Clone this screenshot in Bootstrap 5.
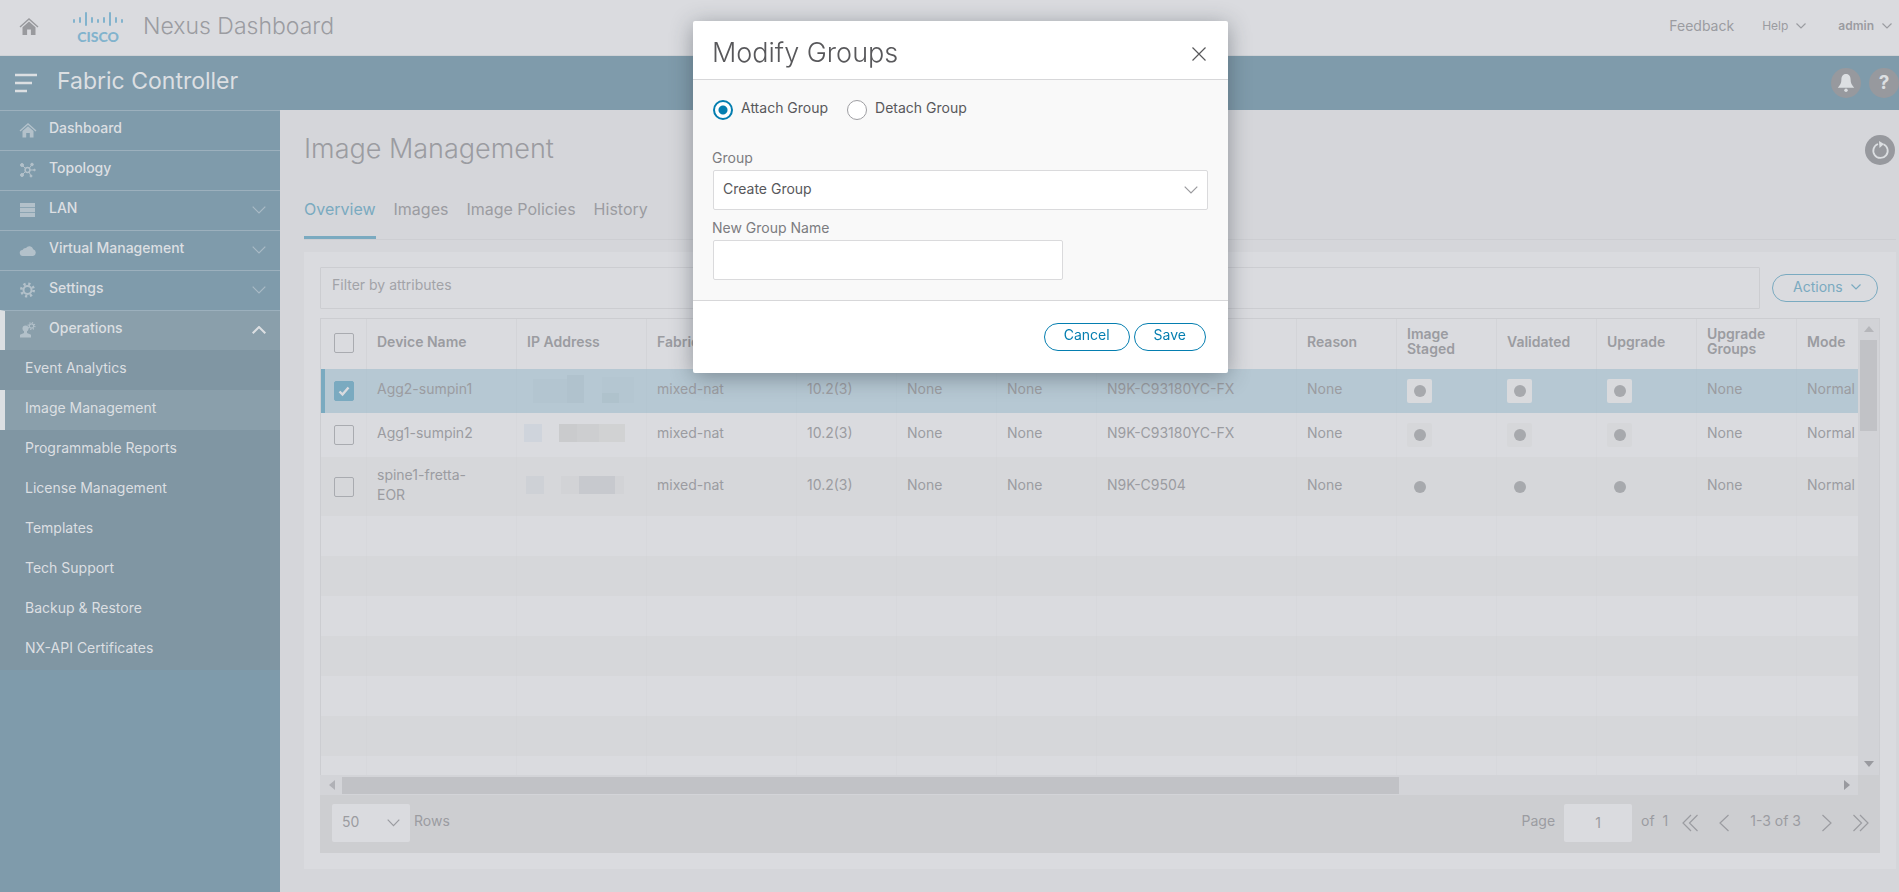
<!DOCTYPE html>
<html lang="en">
<head>
<meta charset="utf-8">
<meta name="viewport" content="width=device-width, initial-scale=1">
<title>Nexus Dashboard - Image Management</title>
<link href="https://cdn.jsdelivr.net/npm/bootstrap@5.3.0/dist/css/bootstrap.min.css" rel="stylesheet">
<style>
:root{--surface:#dadbdf;--page:#d5d6da;--bar:#7f9bab;--ink:#9b9ca1;--accent:#7aaac0;--rule:#cccdd1;--cell:#d7d8dc;--blue:#047eb0}
body{font-family:Inter,"Liberation Sans",sans-serif;font-size:14px;line-height:20px;color:var(--ink);background:var(--page)}
a{text-decoration:none;color:inherit}
svg{display:block;flex:none}
.stroke{fill:none;stroke:currentColor;stroke-width:1.2}
button.plain{border:0;background:none;padding:0;color:inherit}
.topbar{height:56px;background:var(--surface);border-bottom:1px solid #cfd2d6;padding:0 7px 4px 19px}
.brand-title{font-size:23px;font-weight:300;line-height:32px}
.logo-mark{color:#82b3cd;font-family:Lato,sans-serif;font-weight:900;font-size:14px;line-height:14px;width:50px;margin:5px 4px 0 34px}
.top-menu{font-size:12px;gap:8px}
.appbar{height:54px;background:var(--bar);color:#dcdfe2;padding-left:15px;overflow:hidden}
.app-title{font-size:23px;line-height:32px;padding-bottom:4px;margin-left:20px}
.disc{width:30px;height:30px;border-radius:50%;background:#97999e!important;color:#dcdfe2!important}
.disc-text{font-size:19px}
.side{width:280px;background:var(--bar);color:#dcdfe2;font-weight:500;flex:none}
.side-link{height:40px;border-top:1px solid #9cb0bd;padding:0 14px 0 19px}
.side-link .txt{padding-bottom:6px}
.side-link .ico,.side-link .chev{margin-bottom:2px}
.side-link .ico{color:#b3c1ca}
.side-link .chev{color:#a9bac5}
.side-link.open{background:#8a9fab;border-left:5px solid #dcdfe2;padding-left:14px}
.side-link.open .chev{color:#dcdfe2;stroke-width:2}
.submenu{background:#8096a3;font-weight:400}
.sub-link{height:40px;padding:0 0 4px 25px}
.sub-link.current{background:#8a9fab;border-left:5px solid #dcdfe2;padding-left:20px}
.content{padding:0 3px 21px 24px;min-width:0}
.title-row{height:80px;padding-right:1px}
.page-title{font-size:27px;font-weight:300;line-height:36px;padding-bottom:2px}
.tabs{border-bottom:1px solid #cdced2;gap:18px;font-size:16px;line-height:24px}
.tabs .nav-link{color:var(--ink);padding:7px 0 15px;border-bottom:3px solid transparent}
.tabs .nav-link.active{color:var(--accent);border-color:var(--accent)}
.panel{background:var(--surface);margin-top:12px;padding:15px 16px 16px}
.filter{height:42px;border:1px solid var(--rule);border-radius:1px;background:transparent;color:var(--ink);padding:0 12px 8px 11px;min-width:0}
.filter::placeholder{color:#a2a3a8;opacity:1}
.pill{height:28px;border-radius:14px;border:1px solid currentColor;background:transparent;color:inherit;line-height:20px;padding:0 19px 4px}
.pill.actions{color:var(--accent);margin:0 2px 0 12px;width:106px;padding:0 0 2px 20px}
.datagrid{border:1px solid var(--rule);border-bottom:0;margin-top:9px;display:grid;grid-template-columns:minmax(0,1fr) 21px}
.datagrid table{table-layout:fixed;width:100%;min-width:1537px;border-collapse:separate;border-spacing:0}
.w-check{width:45px}.w-sm{width:100px}.w-ip{width:130px}.w-md{width:150px}.w-lg{width:200px}
.datagrid th,.datagrid td{padding:0 3px 4px 10px;border-left:1px solid var(--cell);vertical-align:middle;white-space:nowrap}
.datagrid th{height:50px;padding-bottom:6px;border-color:#d3d4d8;font-weight:600;line-height:15px;white-space:normal}
.datagrid td{height:44px}
.datagrid tr>:first-child{border-left:0;padding-left:13px}
.datagrid .mid{padding-bottom:0}
.datagrid th.mid{padding-bottom:2px}
.datagrid tr.dark td{background:#d6d7da;border-color:#d4d5d8}
.datagrid tr.picked td{background:#b6c8d3;border-color:#b4c6d1}
.datagrid tr.picked td:first-child{border-left:4px solid var(--accent);padding-left:9px}
.datagrid tr.tall td{height:59px;white-space:normal}
.datagrid tr.blank td{height:40px;padding:0}
.datagrid tr.part td{height:19px}
.tick{appearance:none;display:block;width:20px;height:20px;margin:0;border:1px solid #a9abb0;border-radius:2px}
.tick:checked{border-color:var(--accent);background:var(--accent) url("data:image/svg+xml,%3Csvg xmlns='http://www.w3.org/2000/svg' viewBox='0 0 18 18'%3E%3Cpath d='M4.5 9.5l3 3 6-7' fill='none' stroke='%23dadbdf' stroke-width='2.4'/%3E%3C/svg%3E")}
.state{display:flex;width:25px;height:24px;border-radius:2px;background:#d6d7da;align-items:center;justify-content:center}
.state::after{content:"";width:12px;height:12px;border-radius:50%;background:#a7a9ad}
.picked .state{background:#d9dadd}
.ipmask{margin-left:-3px}
.vtrack{background:#d2d3d7;padding:7px 2px 8px;color:#b5b6ba}
.vthumb{width:17px;height:91px;background:#c1c2c6;margin-top:8px}
.hrow{background:#cdced1}
.htrack{height:20px;background:#d3d4d8;margin-right:22px;padding:0 8px 0 9px;color:#b0b1b6}
.hthumb{height:17px;width:69.5%;background:#c1c2c6;margin:0 auto 0 7px}
.dark-arrow{color:#999a9f}
.gridfoot{background:#cdced1;height:58px;padding:0 11px 2px 12px}
.gridfoot .txt{padding-bottom:4px}
.footfield{height:38px;border:0;border-radius:2px;background:var(--surface);color:var(--ink);padding-bottom:2px}
.pgnum{width:68px;text-align:center;margin:0 9px}
.pager{gap:21px;margin-left:14px}
.rowsel{width:78px}
.rowsel select{appearance:none;width:100%;padding:0 10px 2px}
.overlay-chev{position:absolute;right:10px;top:0;bottom:0;margin:auto;pointer-events:none}
.field-chev{color:#9a9a9e}
.modal{padding-left:22px}
.modal-dialog{max-width:535px;margin-top:21px}
.modal-content{border:0;border-radius:2px;color:#58585b;box-shadow:0 4px 22px rgba(40,50,60,.42)}
.modal-header{height:59px;padding:0 21px 0 19px;border-bottom:1px solid #d7d7d9;border-radius:0}
.modal-title{font-size:27px;font-weight:300;line-height:36px;padding-top:6px}
.modal-body{background:#f9f9f9;padding:18px 20px 20px 19px}
.radio-row{margin:0 0 26px 1px}
.radio{appearance:none;width:20px;height:20px;margin:0;border:1px solid #9e9ea2;border-radius:50%;background:#fff}
.radio:checked{border:2px solid var(--blue);background:radial-gradient(circle,var(--blue) 4px,#fff 5px)}
.radio-label{padding:0 0 4px 8px;margin-right:19px}
.flabel{color:#7c7c80;display:block;margin-bottom:2px}
.field{height:40px;border:1px solid #dadadc;border-radius:2px;background:#fff;color:#58585b;appearance:none;padding:0 9px 2px;margin-left:1px}
.field-wide{width:calc(100% - 1px)}
.field-part{width:350px;max-width:100%}
.modal-footer{height:73px;padding:0 22px;gap:4px;color:var(--blue);border-top:1px solid #d7d7d9}
.modal-footer>*{margin:0}
</style>
</head>
<body class="d-flex flex-column min-vh-100">
<header class="topbar d-flex align-items-center">
  <a href="#" aria-label="Home"><svg width="20" height="20" viewBox="0 0 20 20"><path d="M1 11l9-8 9 8" fill="none" stroke="#999a9e" stroke-width="1.5"/><path d="M3.5 11.2L10 5.5l6.5 5.7V19h-4.6v-5.5H8.1V19H3.5z" fill="#999a9e"/></svg></a>
  <div class="logo-mark text-center">
    <svg width="50" height="14" viewBox="0 0 50 14" stroke="#82b3cd" stroke-width="2" stroke-linecap="round"><path d="M1 8v2M7 6v4M13 1v12M19 6v4M25 8v2M31 6v4M37 1v12M43 6v4M49 8v2"/></svg>
    <div class="mt-1">CISCO</div>
  </div>
  <div class="brand-title ms-3">Nexus Dashboard</div>
  <nav class="ms-auto d-flex align-items-center">
    <a href="#">Feedback</a>
    <button class="plain top-menu d-flex align-items-center ms-4 ps-1">Help<svg class="stroke" width="10" height="6" viewBox="0 0 10 6"><path d="M.5.5L5 5 9.5.5"/></svg></button>
    <button class="plain top-menu d-flex align-items-center fw-semibold ms-4 ps-2">admin<svg class="stroke" width="10" height="6" viewBox="0 0 10 6"><path d="M.5.5L5 5 9.5.5"/></svg></button>
  </nav>
</header>
<div class="appbar d-flex align-items-center">
  <button class="plain" aria-label="Toggle menu"><svg width="22" height="20" viewBox="0 0 22 20" stroke="currentColor" stroke-width="2.4"><path d="M0 2h22M0 10h17M0 18h12"/></svg></button>
  <div class="app-title">Fabric Controller</div>
  <div class="ms-auto d-flex gap-2">
    <button class="plain disc d-flex align-items-center justify-content-center" aria-label="Notifications"><svg width="18" height="20" viewBox="0 0 18 20" fill="currentColor"><path d="M9 1C5.7 1 4.4 3.5 4.4 6.5 4.4 10 3.2 12 .8 14.8h16.4C14.8 12 13.6 10 13.6 6.5 13.6 3.5 12.3 1 9 1z"/><circle cx="9" cy="17.300" r="1.700"/></svg></button>
    <button class="plain disc disc-text d-flex align-items-center justify-content-center fw-bold">?</button>
  </div>
</div>
<div class="d-flex flex-grow-1">
  <nav class="side">
    <a href="#" class="side-link d-flex align-items-center"><svg class="ico" width="18" height="16" viewBox="0 0 18 16"><path d="M1 9l8-7 8 7" fill="none" stroke="currentColor" stroke-width="1.4"/><path d="M3.5 9L9 4.3 14.5 9v6.5h-3.7V11H7.2v4.5H3.5z" fill="currentColor"/></svg><span class="txt ms-2 ps-1">Dashboard</span></a>
    <a href="#" class="side-link d-flex align-items-center"><svg class="ico" width="18" height="16" viewBox="0 0 18 16" fill="currentColor" stroke="currentColor"><path d="M3 3l5 5M13 2.5L9 8M3 13l5-5M16 8H9M9 8l3 6"/><circle cx="3" cy="3" r="1.5"/><circle cx="13" cy="2.5" r="1.3"/><circle cx="3" cy="13" r="1.5"/><circle cx="15.5" cy="8" r=".8"/><circle cx="12" cy="14" r="1"/><circle cx="8.5" cy="8" r="2.400" fill="#7f9bab" stroke-width="1.500"/></svg><span class="txt ms-2 ps-1">Topology</span></a>
    <a href="#" class="side-link d-flex align-items-center"><svg class="ico" width="18" height="16" viewBox="0 0 18 16" fill="currentColor"><path d="M1 1h15v4.200H1zM1 6h15v4H1zM1 10.800h15v4.200H1z"/></svg><span class="txt ms-2 ps-1">LAN</span><svg class="chev stroke ms-auto" width="14" height="8" viewBox="0 0 14 8"><path d="M.7.7L7 7 13.300.7"/></svg></a>
    <a href="#" class="side-link d-flex align-items-center"><svg class="ico" width="18" height="16" viewBox="0 0 18 16" fill="currentColor"><path d="M4 14a3 3 0 01-.5-6A3.600 3.600 0 017 6a4 4 0 017.200 1.200A3.500 3.500 0 0114 14z"/></svg><span class="txt ms-2 ps-1">Virtual Management</span><svg class="chev stroke ms-auto" width="14" height="8" viewBox="0 0 14 8"><path d="M.7.7L7 7 13.300.7"/></svg></a>
    <a href="#" class="side-link d-flex align-items-center"><svg class="ico" width="18" height="16" viewBox="0 0 18 16" fill="none" stroke="currentColor"><circle cx="8.500" cy="8" r="4" stroke-width="2"/><circle cx="8.500" cy="8" r="6.200" stroke-width="2.600" stroke-dasharray="2.200 2.670"/></svg><span class="txt ms-2 ps-1">Settings</span><svg class="chev stroke ms-auto" width="14" height="8" viewBox="0 0 14 8"><path d="M.7.7L7 7 13.300.7"/></svg></a>
    <a href="#" class="side-link open d-flex align-items-center"><svg class="ico" width="18" height="16" viewBox="0 0 18 16" fill="currentColor"><circle cx="6.500" cy="6.500" r="3"/><path d="M5 8h3v3l4 1.700V15.500H1v-2.800L5 11z"/><circle cx="12.500" cy="4" r="2.200" fill="none" stroke="currentColor" stroke-width="1.200"/><circle cx="12.500" cy="4" r="3.400" fill="none" stroke="currentColor" stroke-width="1.200" stroke-dasharray="1.200 1.470"/></svg><span class="txt ms-2 ps-1">Operations</span><svg class="chev stroke ms-auto" width="14" height="8" viewBox="0 0 14 8"><path d="M.7 7.300L7 1l6.300 6.300"/></svg></a>
    <div class="submenu">
      <a href="#" class="sub-link d-flex align-items-center">Event Analytics</a>
      <a href="#" class="sub-link current d-flex align-items-center">Image Management</a>
      <a href="#" class="sub-link d-flex align-items-center">Programmable Reports</a>
      <a href="#" class="sub-link d-flex align-items-center">License Management</a>
      <a href="#" class="sub-link d-flex align-items-center">Templates</a>
      <a href="#" class="sub-link d-flex align-items-center">Tech Support</a>
      <a href="#" class="sub-link d-flex align-items-center">Backup &amp; Restore</a>
      <a href="#" class="sub-link d-flex align-items-center">NX-API Certificates</a>
    </div>
  </nav>
  <main class="content flex-grow-1">
    <div class="title-row d-flex align-items-center justify-content-between">
      <h1 class="page-title m-0">Image Management</h1>
      <button class="plain disc d-flex align-items-center justify-content-center" aria-label="Refresh"><svg width="20" height="20" viewBox="0 0 20 20"><path d="M13.500 4.200A7.200 7.200 0 1 1 8 4" fill="none" stroke="currentColor" stroke-width="1.800"/><path d="M9 1l5 3-4.500 4z" fill="currentColor"/></svg></button>
    </div>
    <nav class="nav tabs">
      <a class="nav-link active" href="#">Overview</a>
      <a class="nav-link" href="#">Images</a>
      <a class="nav-link" href="#">Image Policies</a>
      <a class="nav-link" href="#">History</a>
    </nav>
    <section class="panel">
      <div class="d-flex align-items-center">
        <input class="filter flex-grow-1" type="text" placeholder="Filter by attributes" aria-label="Filter by attributes">
        <button class="pill actions d-flex align-items-center">Actions<svg class="stroke ms-2" width="10" height="6" viewBox="0 0 10 6"><path d="M.5.5L5 5 9.5.5"/></svg></button>
      </div>
      <div class="datagrid">
        <div class="overflow-hidden">
          <table>
            <colgroup><col class="w-check"><col class="w-md"><col class="w-ip"><col class="w-md"><col class="w-sm"><col class="w-sm"><col class="w-sm"><col class="w-lg"><col class="w-sm"><col class="w-sm"><col class="w-sm"><col class="w-sm"><col class="w-sm"><col></colgroup>
            <thead><tr>
              <th class="mid"><input type="checkbox" class="tick" aria-label="Select all"></th><th>Device Name</th><th>IP Address</th><th>Fabric Name</th><th>Version</th><th>Policy</th><th>Status</th><th>Model</th><th>Reason</th><th>Image<br>Staged</th><th>Validated</th><th>Upgrade</th><th>Upgrade<br>Groups</th><th>Mode</th>
            </tr></thead>
            <tbody>
              <tr class="picked"><td class="mid"><input type="checkbox" class="tick" checked aria-label="Select Agg2-sumpin1"></td><td>Agg2-sumpin1</td>
                <td><svg class="ipmask" width="110" height="28"><path fill="#b3c5d0" d="M9 4h34v24H9z"/><path fill="#b0c2cd" d="M43 0h17v28H43z"/><path fill="#b4c6d1" d="M78 2h32v26H78z"/><path fill="#afc2cc" d="M78 18h17v10H78z"/></svg></td>
                <td>mixed-nat</td><td>10.2(3)</td><td>None</td><td>None</td><td>N9K-C93180YC-FX</td><td>None</td><td class="mid"><span class="state"></span></td><td class="mid"><span class="state"></span></td><td class="mid"><span class="state"></span></td><td>None</td><td>Normal</td></tr>
              <tr><td class="mid"><input type="checkbox" class="tick" aria-label="Select Agg1-sumpin2"></td><td>Agg1-sumpin2</td>
                <td><svg class="ipmask" width="110" height="18"><path fill="#cfd4dc" d="M0 0h18v18H0z"/><path fill="#cacbcd" d="M35 0h18v18H35z"/><path fill="#cdced0" d="M53 0h22v18H53z"/><path fill="#d1d2d3" d="M75 0h26v18H75z"/></svg></td>
                <td>mixed-nat</td><td>10.2(3)</td><td>None</td><td>None</td><td>N9K-C93180YC-FX</td><td>None</td><td class="mid"><span class="state"></span></td><td class="mid"><span class="state"></span></td><td class="mid"><span class="state"></span></td><td>None</td><td>Normal</td></tr>
              <tr class="dark tall"><td class="mid"><input type="checkbox" class="tick" aria-label="Select spine1-fretta-EOR"></td><td>spine1-fretta-<br>EOR</td>
                <td><svg class="ipmask" width="110" height="18"><path fill="#ced1d6" d="M2 0h18v18H2z"/><path fill="#d2d3d6" d="M37 0h18v18H37z"/><path fill="#c7c9ce" d="M55 0h36v18H55z"/><path fill="#d2d3d6" d="M91 0h9v18H91z"/></svg></td>
                <td>mixed-nat</td><td>10.2(3)</td><td>None</td><td>None</td><td>N9K-C9504</td><td>None</td><td class="mid"><span class="state"></span></td><td class="mid"><span class="state"></span></td><td class="mid"><span class="state"></span></td><td>None</td><td>Normal</td></tr>
              <tr class="blank"><td></td><td></td><td></td><td></td><td></td><td></td><td></td><td></td><td></td><td></td><td></td><td></td><td></td><td></td></tr>
              <tr class="blank dark"><td></td><td></td><td></td><td></td><td></td><td></td><td></td><td></td><td></td><td></td><td></td><td></td><td></td><td></td></tr>
              <tr class="blank"><td></td><td></td><td></td><td></td><td></td><td></td><td></td><td></td><td></td><td></td><td></td><td></td><td></td><td></td></tr>
              <tr class="blank dark"><td></td><td></td><td></td><td></td><td></td><td></td><td></td><td></td><td></td><td></td><td></td><td></td><td></td><td></td></tr>
              <tr class="blank"><td></td><td></td><td></td><td></td><td></td><td></td><td></td><td></td><td></td><td></td><td></td><td></td><td></td><td></td></tr>
              <tr class="blank dark"><td></td><td></td><td></td><td></td><td></td><td></td><td></td><td></td><td></td><td></td><td></td><td></td><td></td><td></td></tr>
              <tr class="blank part"><td></td><td></td><td></td><td></td><td></td><td></td><td></td><td></td><td></td><td></td><td></td><td></td><td></td><td></td></tr>
            </tbody>
          </table>
        </div>
        <div class="vtrack d-flex flex-column align-items-center">
          <svg width="10" height="6" viewBox="0 0 10 6" fill="currentColor"><path d="M0 6l5-6 5 6z"/></svg>
          <div class="vthumb"></div>
          <svg class="mt-auto dark-arrow" width="10" height="6" viewBox="0 0 10 6" fill="currentColor"><path d="M0 0l5 6 5-6z"/></svg>
        </div>
      </div>
      <div class="hrow">
        <div class="htrack d-flex align-items-center">
          <svg width="6" height="10" viewBox="0 0 6 10" fill="currentColor"><path d="M6 0L0 5l6 5z"/></svg>
          <div class="hthumb"></div>
          <svg class="dark-arrow" width="6" height="10" viewBox="0 0 6 10" fill="currentColor"><path d="M0 0l6 5-6 5z"/></svg>
        </div>
      </div>
      <div class="gridfoot d-flex align-items-center">
        <div class="rowsel position-relative"><select id="rows" class="footfield"><option>50</option></select><svg class="stroke overlay-chev" width="13" height="8" viewBox="0 0 13 8"><path d="M.7.7l5.800 6 5.800-6"/></svg></div>
        <label for="rows" class="txt ps-1 ms-0">Rows</label>
        <div class="ms-auto d-flex align-items-center">
          <label for="pg" class="txt">Page</label>
          <input id="pg" type="text" class="footfield pgnum" value="1">
          <span class="txt">of &nbsp;1</span>
          <div class="pager d-flex align-items-center">
          <button class="plain" aria-label="First page"><svg class="stroke" width="16" height="18" viewBox="0 0 16 18"><path d="M9 1L1 9l8 8M15.500 1l-8 8 8 8"/></svg></button>
          <button class="plain" aria-label="Previous page"><svg class="stroke" width="10" height="18" viewBox="0 0 10 18"><path d="M9.500 1L1 9l8.500 8"/></svg></button>
          <span class="txt">1-3 of 3</span>
          <button class="plain" aria-label="Next page"><svg class="stroke" width="10" height="18" viewBox="0 0 10 18"><path d="M.5 1L9 9 .5 17"/></svg></button>
          <button class="plain" aria-label="Last page"><svg class="stroke" width="16" height="18" viewBox="0 0 16 18"><path d="M.5 1l8 8-8 8M7 1l8 8-8 8"/></svg></button>
          </div>
        </div>
      </div>
    </section>
  </main>
</div>
<div class="modal d-block" tabindex="-1" role="dialog" aria-labelledby="dlgTitle">
  <div class="modal-dialog">
    <form class="modal-content">
      <div class="modal-header">
        <h2 class="modal-title" id="dlgTitle">Modify Groups</h2>
        <button type="button" class="plain mt-2" aria-label="Close"><svg class="stroke" width="16" height="16" viewBox="0 0 16 16"><path d="M1.500 1.500l13 13M14.500 1.500l-13 13"/></svg></button>
      </div>
      <div class="modal-body">
        <div class="radio-row d-flex align-items-center">
          <input class="radio" type="radio" name="mode" id="attach" checked><label class="radio-label" for="attach">Attach Group</label>
          <input class="radio" type="radio" name="mode" id="detach"><label class="radio-label" for="detach">Detach Group</label>
        </div>
        <label class="flabel" for="grp">Group</label>
        <div class="position-relative mb-2"><select id="grp" class="field field-wide"><option>Create Group</option></select><svg class="stroke overlay-chev field-chev" width="14" height="8" viewBox="0 0 14 8"><path d="M.7.7L7 7 13.300.7"/></svg></div>
        <label class="flabel" for="gname">New Group Name</label>
        <input id="gname" type="text" class="field field-part">
      </div>
      <div class="modal-footer flex-nowrap">
        <button type="button" class="pill">Cancel</button>
        <button type="button" class="pill">Save</button>
      </div>
    </form>
  </div>
</div>
<script src="https://cdn.jsdelivr.net/npm/bootstrap@5.3.0/dist/js/bootstrap.bundle.min.js"></script>
</body>
</html>
